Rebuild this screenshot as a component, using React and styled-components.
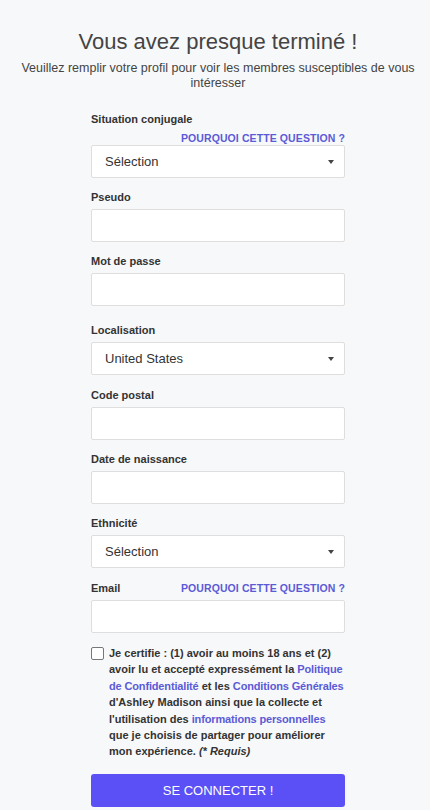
import styled, { createGlobalStyle } from "styled-components";

const GlobalStyle = createGlobalStyle`
  html, body {
    margin: 0;
    padding: 0;
    background: #f7f8fa;
    font-family: "Liberation Sans", Arial, sans-serif;
  }
`;

const Page = styled.div`
  min-height: 810px;
  padding: 29px 0 0 6px;
  box-sizing: border-box;
`;

const Title = styled.h1`
  margin: 0;
  font-size: 22px;
  line-height: 26px;
  font-weight: 400;
  color: #444;
  text-align: center;
`;

const Subtitle = styled.p`
  margin: 6px 0 0;
  font-size: 12.5px;
  line-height: 15px;
  color: #444;
  text-align: center;
`;

const Form = styled.form`
  width: 254px;
  margin: 21px auto 0;
`;

const Field = styled.div`
  margin-bottom: ${(p) => p.gap || 12}px;
`;

const LabelRow = styled.div`
  display: flex;
  justify-content: space-between;
  align-items: center;
  margin-bottom: 5px;
`;

const Label = styled.label`
  font-size: 11px;
  line-height: 14px;
  font-weight: 700;
  color: #333;
`;

const Why = styled.a`
  font-size: 10.5px;
  line-height: 14px;
  font-weight: 700;
  color: #5b5bd6;
  letter-spacing: 0.1px;
  text-decoration: none;
`;

const WhyRow = styled.div`
  display: flex;
  justify-content: flex-end;
`;

const Input = styled.div`
  height: 33px;
  box-sizing: border-box;
  background: #fff;
  border: 1px solid #dedede;
  border-radius: 2px;
`;

const Select = styled.div`
  height: 33px;
  box-sizing: border-box;
  background: #fff;
  border: 1px solid #dedede;
  border-radius: 2px;
  display: flex;
  align-items: center;
  justify-content: space-between;
  padding: 0 10px 0 13px;
  font-size: 13px;
  color: #333;
`;

const Caret = styled.span`
  width: 0;
  height: 0;
  border-left: 3.5px solid transparent;
  border-right: 3.5px solid transparent;
  border-top: 4px solid #444;
`;

const Consent = styled.div`
  display: flex;
  align-items: flex-start;
  gap: 5px;
  margin-top: 11px;
`;

const Box = styled.span`
  flex: none;
  width: 11px;
  height: 11px;
  margin-top: 2px;
  border: 1px solid #777;
  border-radius: 2px;
  background: #fff;
`;

const ConsentText = styled.p`
  margin: 0;
  font-size: 11px;
  line-height: 16.4px;
  font-weight: 700;
  color: #333;
  white-space: nowrap;
`;

const Link = styled.a`
  color: #5b5bd6;
  letter-spacing: -0.15px;
  text-decoration: none;
`;

const Submit = styled.button`
  display: block;
  width: 100%;
  height: 33px;
  margin-top: 14px;
  border: none;
  border-radius: 3px;
  background: #5a50f5;
  color: #fff;
  font-family: "Liberation Sans", Arial, sans-serif;
  font-size: 13px;
  cursor: pointer;
`;

const TextField = ({ label, why, gap }) => (
  <Field gap={gap}>
    <LabelRow>
      <Label>{label}</Label>
      {why && <Why>POURQUOI CETTE QUESTION ?</Why>}
    </LabelRow>
    <Input />
  </Field>
);

const SelectField = ({ label, value, why, gap }) => (
  <Field gap={gap}>
    <LabelRow>
      <Label>{label}</Label>
    </LabelRow>
    {why && (
      <WhyRow>
        <Why>POURQUOI CETTE QUESTION ?</Why>
      </WhyRow>
    )}
    <Select>
      <span>{value}</span>
      <Caret />
    </Select>
  </Field>
);

export default function App() {
  return (
    <Page>
      <GlobalStyle />
      <Title>Vous avez presque terminé !</Title>
      <Subtitle>
        Veuillez remplir votre profil pour voir les membres susceptibles de vous
        <br />
        intéresser
      </Subtitle>
      <Form>
        <SelectField label="Situation conjugale" value="Sélection" why />
        <TextField label="Pseudo" />
        <TextField label="Mot de passe" gap={17} />
        <SelectField label="Localisation" value="United States" gap={13} />
        <TextField label="Code postal" />
        <TextField label="Date de naissance" />
        <SelectField label="Ethnicité" value="Sélection" gap={13} />
        <TextField label="Email" why />
        <Consent>
          <Box />
          <ConsentText>
            Je certifie : (1) avoir au moins 18 ans et (2)
            <br />
            avoir lu et accepté expressément la <Link>Politique</Link>
            <br />
            <Link>de Confidentialité</Link> et les <Link>Conditions Générales</Link>
            <br />
            d'Ashley Madison ainsi que la collecte et
            <br />
            l'utilisation des <Link>informations personnelles</Link>
            <br />
            que je choisis de partager pour améliorer
            <br />
            mon expérience. <i>(* Requis)</i>
          </ConsentText>
        </Consent>
        <Submit type="button">SE CONNECTER !</Submit>
      </Form>
    </Page>
  );
}
